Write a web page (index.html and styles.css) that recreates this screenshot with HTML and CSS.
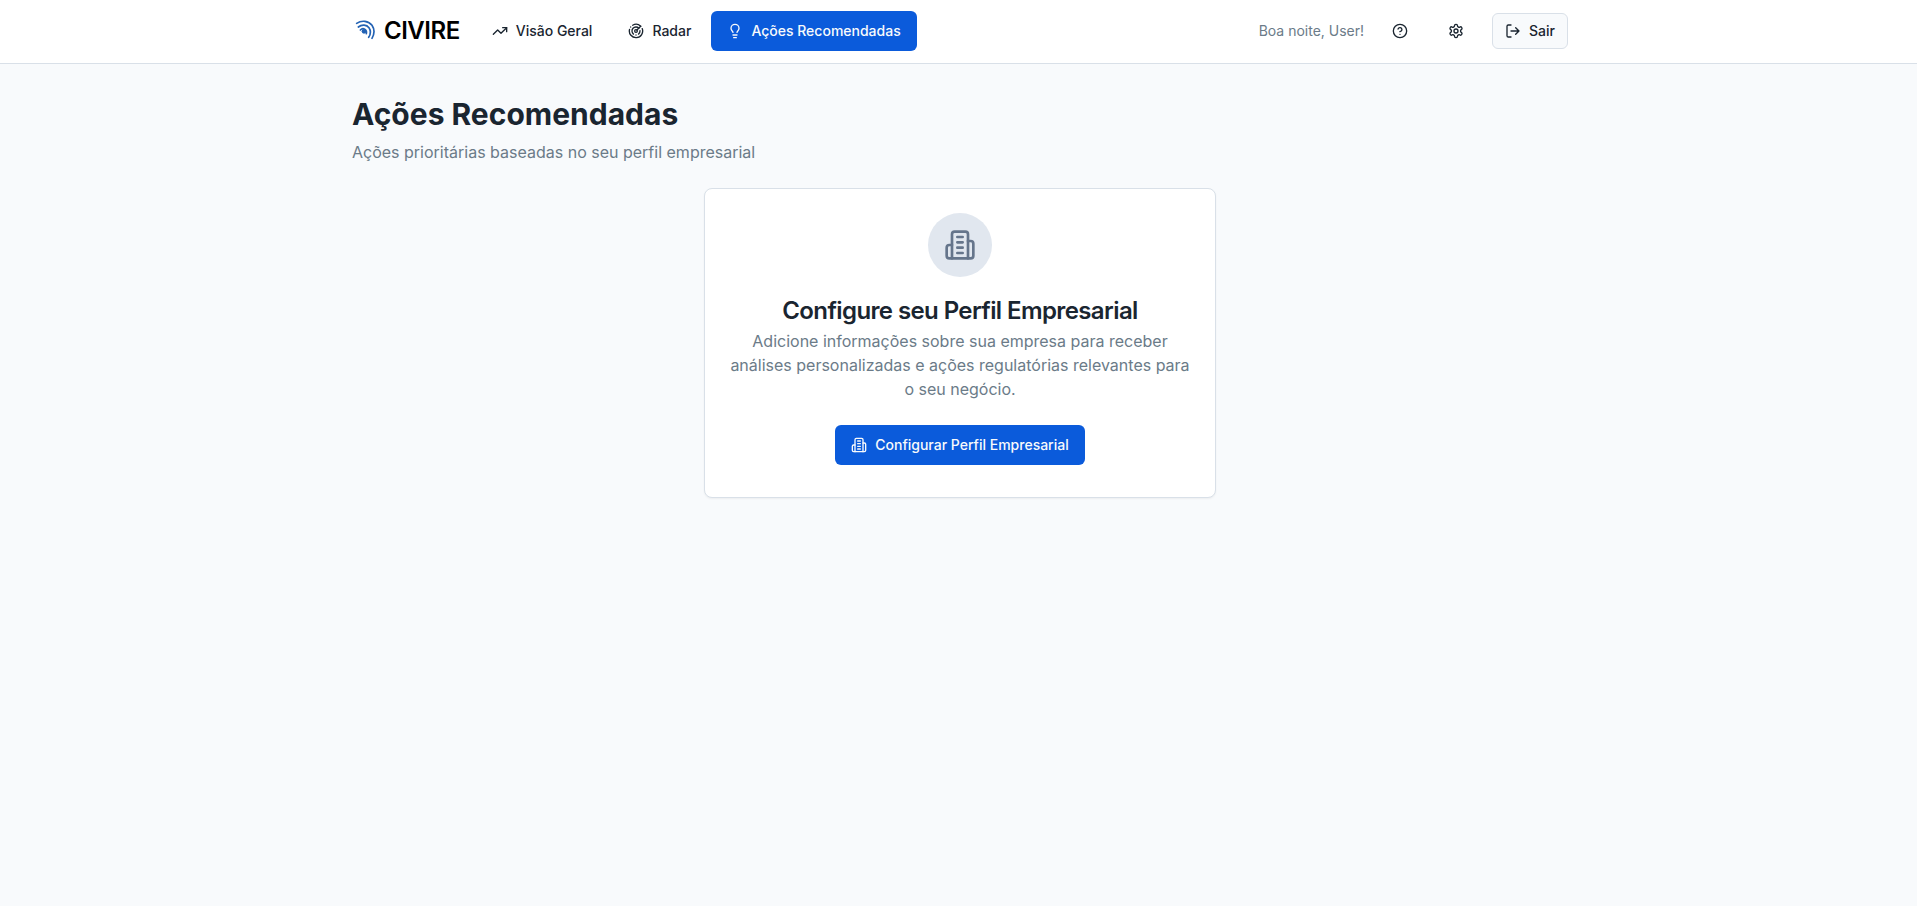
FILE: index.html
```html
<!DOCTYPE html>
<html lang="pt-BR">
<head>
<meta charset="utf-8">
<title>CIVIRE - Ações Recomendadas</title>
<link rel="stylesheet" href="styles.css">
</head>
<body>
<svg class="sprite" aria-hidden="true">
  <symbol id="building" viewBox="0 0 24 24"><path d="M6 22V4a2 2 0 0 1 2-2h8a2 2 0 0 1 2 2v18Z"/><path d="M6 12H4a2 2 0 0 0-2 2v6a2 2 0 0 0 2 2h2"/><path d="M18 9h2a2 2 0 0 1 2 2v9a2 2 0 0 1-2 2h-2"/><path d="M10 6h4M10 10h4M10 14h4M10 18h4"/></symbol>
</svg>
<header class="topbar">
  <div class="container topbar-inner">
    <div class="topbar-side">
      <a class="brand" href="#">
        <svg class="brand-mark" viewBox="0 0 72 72" aria-hidden="true">
          <path d="M14 13C29 3 50 5 60 19C68 31 67 46 60 58"/>
          <path d="M19 24C30 15 44 17 51 26C57 35 56 46 50 55"/>
          <path d="M25 33C33 25 46 31 43 44"/>
          <circle cx="36" cy="37" r="7"/>
        </svg>
        <span>CIVIRE</span>
      </a>
      <nav class="nav">
        <a class="button" href="#"><svg class="icon" viewBox="0 0 24 24" aria-hidden="true"><path d="m22 7-8.500 8.500-5-5L2 17"/><path d="M16 7h6v6"/></svg>Visão Geral</a>
        <a class="button" href="#"><svg class="icon" viewBox="0 0 24 24" aria-hidden="true"><path d="M19.070 4.930A10 10 0 0 0 6.990 3.340"/><path d="M4 6h.01"/><path d="M2.290 9.620A10 10 0 1 0 21.310 8.350"/><path d="M16.240 7.760A6 6 0 1 0 8.230 16.670"/><path d="M12 18h.01"/><path d="M17.990 11.660A6 6 0 0 1 15.770 16.670"/><circle cx="12" cy="12" r="2"/><path d="m13.410 10.590 5.660-5.660"/></svg>Radar</a>
        <a class="button primary" href="#" aria-current="page"><svg class="icon" viewBox="0 0 24 24" aria-hidden="true"><path d="M15 14c.2-1 .7-1.700 1.500-2.500 1-.9 1.500-2.200 1.500-3.500A6 6 0 0 0 6 8c0 1 .2 2.200 1.500 3.500.7.7 1.300 1.500 1.500 2.500"/><path d="M9 18h6M10 22h4"/></svg>Ações Recomendadas</a>
      </nav>
    </div>
    <div class="topbar-side actions">
      <span class="greeting">Boa noite, User!</span>
      <button class="icon-button" type="button" aria-label="Ajuda"><svg class="icon" viewBox="0 0 24 24" aria-hidden="true"><circle cx="12" cy="12" r="10"/><path d="M9.090 9a3 3 0 0 1 5.830 1c0 2-3 3-3 3M12 17h.01"/></svg></button>
      <button class="icon-button" type="button" aria-label="Configurações"><svg class="icon" viewBox="0 0 24 24" aria-hidden="true"><path d="M12.220 2h-.44a2 2 0 0 0-2 2v.18a2 2 0 0 1-1 1.730l-.43.25a2 2 0 0 1-2 0l-.15-.08a2 2 0 0 0-2.730.73l-.22.38a2 2 0 0 0 .73 2.730l.15.1a2 2 0 0 1 1 1.720v.51a2 2 0 0 1-1 1.740l-.15.09a2 2 0 0 0-.73 2.730l.22.38a2 2 0 0 0 2.730.73l.15-.08a2 2 0 0 1 2 0l.43.25a2 2 0 0 1 1 1.730V20a2 2 0 0 0 2 2h.44a2 2 0 0 0 2-2v-.18a2 2 0 0 1 1-1.730l.43-.25a2 2 0 0 1 2 0l.15.08a2 2 0 0 0 2.730-.73l.22-.39a2 2 0 0 0-.73-2.730l-.15-.08a2 2 0 0 1-1-1.740v-.5a2 2 0 0 1 1-1.740l.15-.09a2 2 0 0 0 .73-2.730l-.22-.38a2 2 0 0 0-2.730-.73l-.15.08a2 2 0 0 1-2 0l-.43-.25a2 2 0 0 1-1-1.730V4a2 2 0 0 0-2-2z"/><circle cx="12" cy="12" r="3"/></svg></button>
      <button class="button outline" type="button"><svg class="icon" viewBox="0 0 24 24" aria-hidden="true"><path d="M9 21H5a2 2 0 0 1-2-2V5a2 2 0 0 1 2-2h4"/><path d="m16 17 5-5-5-5M21 12H9"/></svg>Sair</button>
    </div>
  </div>
</header>
<main class="container page">
  <h1 class="page-title">Ações Recomendadas</h1>
  <p class="page-subtitle">Ações prioritárias baseadas no seu perfil empresarial</p>
  <section class="card">
    <div class="card-icon"><svg class="icon large" aria-hidden="true"><use href="#building"/></svg></div>
    <h2 class="card-title">Configure seu Perfil Empresarial</h2>
    <p class="card-text">Adicione informações sobre sua empresa para receber análises personalizadas e ações regulatórias relevantes para o seu negócio.</p>
    <button class="button primary" type="button"><svg class="icon" aria-hidden="true"><use href="#building"/></svg>Configurar Perfil Empresarial</button>
  </section>
</main>
</body>
</html>
```

FILE: styles.css
```css
* { box-sizing: border-box; }

body {
  margin: 0;
  background: #f8fafc;
  color: #1a2530;
  font-family: Inter, "Liberation Sans", sans-serif;
  font-size: 16px;
  line-height: 24px;
}

h1, h2, p { margin: 0; }

.sprite { display: none; }

.container {
  max-width: 1283px;
  margin: 0 auto;
  padding: 0 32px 0 35px;
}

.topbar {
  padding: 11px 0 12px;
  background: #fff;
  border-bottom: 1px solid #d9e0e8;
}

.topbar-inner {
  display: flex;
  align-items: center;
  justify-content: space-between;
}

.topbar-side { display: flex; align-items: center; gap: 16px; }

.brand {
  display: flex;
  align-items: center;
  gap: 8px;
  color: #000;
  font-size: 24px;
  font-weight: 600;
  line-height: 32px;
  letter-spacing: -0.02em;
  text-decoration: none;
}

.brand-mark {
  width: 24px;
  height: 24px;
  fill: none;
  stroke: #2362b4;
  stroke-width: 5;
  stroke-linecap: round;
}

.brand-mark circle { fill: #2362b4; stroke: none; }

.nav { display: flex; gap: 4px; }

.button {
  display: inline-flex;
  align-items: center;
  justify-content: center;
  gap: 8px;
  height: 40px;
  padding: 0 16px;
  border: 0;
  border-radius: 6px;
  background: transparent;
  color: inherit;
  font: inherit;
  font-size: 14px;
  font-weight: 500;
  line-height: 20px;
  white-space: nowrap;
  text-decoration: none;
}

.primary { background: #0b5bdb; color: #f8fafc; }

.outline {
  height: 36px;
  padding: 0 12px;
  border: 1px solid #d9e0e8;
  background: #f8fafc;
}

.icon {
  flex: none;
  width: 16px;
  height: 16px;
  fill: none;
  stroke: currentColor;
  stroke-width: 2;
  stroke-linecap: round;
  stroke-linejoin: round;
}

.icon.large { width: 32px; height: 32px; }

.icon-button {
  display: flex;
  align-items: center;
  justify-content: center;
  width: 40px;
  height: 40px;
  padding: 0;
  border: 0;
  border-radius: 6px;
  background: transparent;
  color: inherit;
}

.greeting { color: #6b7b88; font-size: 14px; line-height: 20px; }

.page { padding-top: 32px; padding-bottom: 32px; }

.page-title { font-size: 30px; font-weight: 700; line-height: 36px; }

.page-subtitle { margin-top: 8px; color: #6b7b88; }

.card {
  display: flex;
  flex-direction: column;
  align-items: center;
  max-width: 512px;
  margin: 24px auto 0;
  padding: 24px 24px 32px;
  border: 1px solid #d9e0e8;
  border-radius: 8px;
  background: #fff;
  box-shadow: 0 1px 2px rgba(0, 0, 0, 0.05);
  text-align: center;
}

.card-icon {
  display: flex;
  align-items: center;
  justify-content: center;
  width: 64px;
  height: 64px;
  border-radius: 50%;
  background: #e1e7ef;
  color: #65758b;
}

.card-title {
  margin-top: 16px;
  font-size: 24px;
  font-weight: 600;
  line-height: 36px;
  letter-spacing: -0.025em;
}

.card-text { margin-bottom: 24px; color: #6b7b88; }
```
